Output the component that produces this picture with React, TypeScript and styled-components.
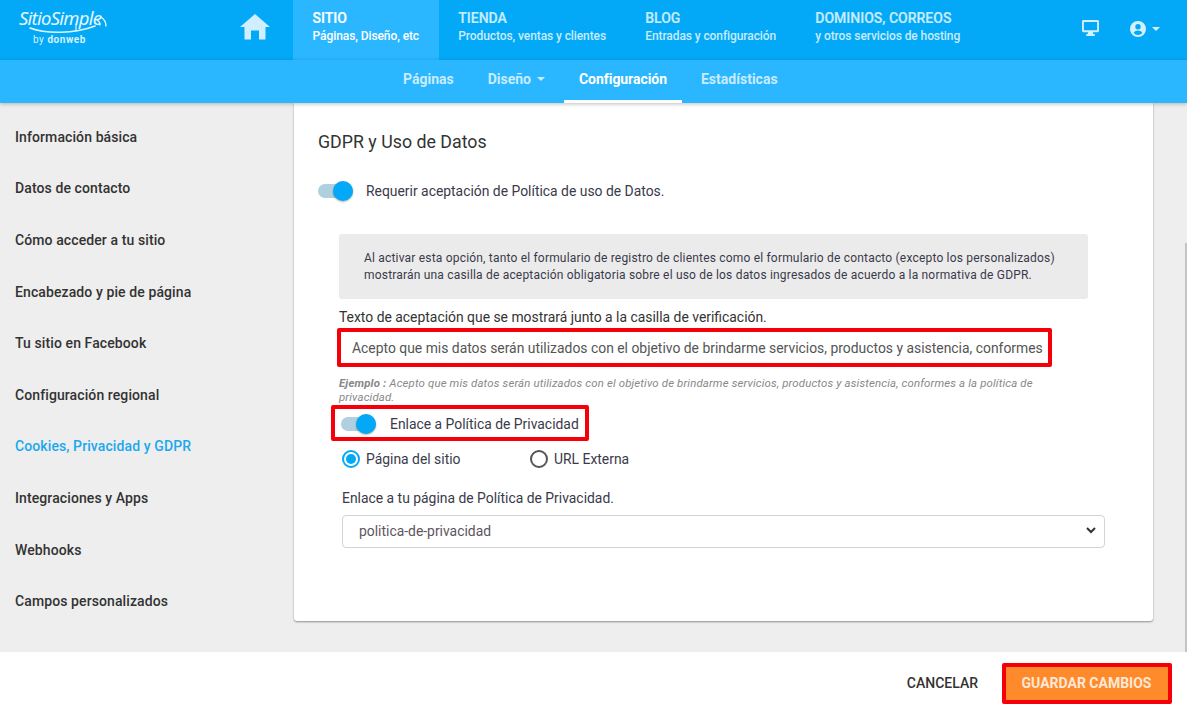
import React from "react";
import styled, { createGlobalStyle } from "styled-components";

const Global = createGlobalStyle`
  html, body { margin: 0; padding: 0; height: 712px; overflow: hidden; background: #fff; }
  body { font-family: Roboto, "Liberation Sans", sans-serif; color: #333; }
  * { box-sizing: border-box; }
`;
const Page = styled.div`width: 1187px; height: 712px; display: flex; flex-direction: column; position: relative; overflow: hidden;`;
const TopBar = styled.header`height: 60px; background: #03a9f7; display: flex; color: #fff; flex: none;`;
const LogoArea = styled.div`width: 293px; flex: none; display: flex; align-items: flex-start; justify-content: space-between; padding: 9px 23px 0 19px;`;
const LogoWrap = styled.div`width: 90px; height: 40px; position: relative;`;
const LogoTitle = styled.div`font-family: "Noto Sans", sans-serif; font-size: 18.5px; font-style: italic; letter-spacing: -0.75px; line-height: 20px; color: #e4f6ff; position: absolute; left: 0; top: -1px; white-space: nowrap;`;
const LogoSwoosh = styled.svg`position: absolute; left: 0; top: 0;`;
const LogoSub = styled.div`position: absolute; left: 14px; top: 25px; font-size: 10px; line-height: 12px; font-weight: 700; color: #d6f1ff; white-space: nowrap; letter-spacing: .55px; & span { font-weight: 400; }`;
const HomeIcon = styled.svg`margin-top: 5px;`;
const NavTab = styled.div<{ $active?: boolean }>`
  padding: 10px 19.6px 0; height: 60px; background: ${p => p.$active ? "#2bb7ff" : "transparent"};
  font-size: 12px; letter-spacing: -0.09px; line-height: 16px; color: ${p => p.$active ? "#fff" : "#c8ecff"}; font-weight: 500; white-space: nowrap;
`;
const NavTitle = styled.div`font-size: 14px; letter-spacing: 0; line-height: 16px; font-weight: 500; -webkit-text-stroke: .2px currentColor; margin-bottom: 2px;`;
const TopIcons = styled.div`margin-left: auto; display: flex; align-items: flex-start; padding: 20px 27px 0 0; gap: 31px; color: #d4f0ff;`;
const UserMenu = styled.div`display: flex; align-items: center; gap: 6px; margin-top: 1px;`;
const Caret = styled.span`display: inline-block; width: 0; height: 0; border-left: 4px solid transparent; border-right: 4px solid transparent; border-top: 4px solid currentColor;`;
const SubBar = styled.nav`height: 43px; background: #2bb7ff; flex: none; display: flex; padding-left: 388px; gap: 4px; position: relative; z-index: 2; box-shadow: 0 1px 4px rgba(0,0,0,.25);`;
const SubTab = styled.div<{ $active?: boolean }>`
  padding: 0 15px 2px; display: flex; align-items: center; gap: 6px; height: 43px; font-size: 14px; letter-spacing: ${p => p.$active ? "-0.05px" : "0"}; font-weight: 700; color: ${p => p.$active ? "#fff" : "#c8ecff"};
  border-bottom: 3px solid ${p => p.$active ? "#fff" : "transparent"};
  white-space: nowrap;
`;
const Body = styled.div`flex: 1; display: flex; background: #eee; min-height: 0;`;
const Side = styled.aside`width: 294px; flex: none; padding-top: 8px;`;
const SideItem = styled.div<{ $active?: boolean }>`
  height: 51.6px; display: flex; align-items: center; padding-left: 15px; font-size: 14px; font-weight: 500; letter-spacing: .1px;
  color: ${p => p.$active ? "#1ca8ee" : "#333"};
`;
const Card = styled.main`width: 859px; height: 518px; flex: none; background: #fff; border-radius: 0 0 3px 3px; box-shadow: 0 1px 2px rgba(0,0,0,.4); padding: 28px 24px 0;`;
const Title = styled.h2`margin: 0 0 26px; font-size: 17.8px; font-weight: 400; line-height: 22px; color: #333;`;
const Toggle = styled.div`width: 35px; height: 14px; border-radius: 7px; background: #b0cfdf; position: relative; flex: none;`;
const Knob = styled.div`width: 20px; height: 20px; border-radius: 50%; background: #03a9f7; position: absolute; right: 0; top: -3px; box-shadow: 0 1px 2px rgba(0,0,0,.3);`;
const ToggleRow = styled.div`display: flex; align-items: center; gap: 13px; font-size: 13.9px; line-height: 20px; height: 22px; color: #3a3a4a; padding-top: 1px;`;
const Indented = styled.div`padding-left: 21px; margin-top: 33px;`;
const Note = styled.div`width: 749px; height: 65px; margin-top: 1px; background: #ebebeb; border-radius: 3px; padding: 16px 25px; font-size: 12px; line-height: 16.5px; letter-spacing: .19px; color: #3a3a4a;`;
const FieldLabel = styled.div`font-size: 13.9px; line-height: 18px; margin-top: 9px; color: #333; white-space: nowrap;`;
const Redbox = styled.div`border: 4px solid #f50008; border-radius: 2px; background: #fff;`;
const InputBox = styled(Redbox)`width: 715px; height: 39px; margin-top: 2px; margin-left: -2px; padding: 0 3px 0 11px; display: flex; align-items: center; font-size: 13.9px; color: #555; white-space: nowrap;`;
const Example = styled.div`font-size: 11.4px; line-height: 14px; font-style: italic; color: #888; margin-top: 9px; width: 720px; letter-spacing: .15px; & b { font-weight: 700; }`;
const ToggleBox = styled(Redbox)`width: 258px; height: 36px; margin: 1px 0 0 -8px; padding-left: 6px; display: flex; align-items: center;`;
const ToggleLabel = styled.span`margin-left: 1px;`;
const Radios = styled.div`display: flex; margin: 7px 0 0 3px; height: 22px; align-items: center; font-size: 13.9px; color: #3a3a4a;`;
const Radio = styled.label<{ $width: number }>`display: flex; align-items: center; gap: 6px; width: ${p => p.$width}px;`;
const Dot = styled.span<{ $on?: boolean }>`
  width: 18px; height: 18px; border-radius: 50%; border: 2px solid ${p => p.$on ? "#03a9f7" : "#555"}; display: flex; align-items: center; justify-content: center;
  &::after { content: ""; width: 10px; height: 10px; border-radius: 50%; background: ${p => p.$on ? "#03a9f7" : "transparent"}; }
`;
const SelectLabel = styled.div`font-size: 13.9px; line-height: 18px; margin: 19px 0 0 3px; color: #3a3a4a;`;
const Select = styled.div`width: 763px; height: 33px; margin: 8px 0 0 3px; border: 1px solid #ced4da; border-radius: 4px; display: flex; align-items: center; justify-content: space-between; padding: 0 8px 2px 16px; font-size: 13.9px; color: #5d5560;`;
const Footer = styled.footer`height: 60px; flex: none; background: #fff; display: flex; align-items: center; justify-content: flex-end; padding: 2px 15px 0 0; gap: 24px;`;
const Cancel = styled.div`font-size: 14px; font-weight: 500; color: #333;`;
const Save = styled.div`width: 170px; height: 41px; background: #ff8a2b; border: 4px solid #f50008; border-radius: 2px; color: #ffe8d6; font-size: 14px; font-weight: 700; display: flex; align-items: center; justify-content: center; padding-right: 1px;`;
const Scroll = styled.div`position: absolute; right: 0; top: 243px; width: 2px; height: 409px; background: #c4c4c4;`;

const items = ["Información básica", "Datos de contacto", "Cómo acceder a tu sitio", "Encabezado y pie de página", "Tu sitio en Facebook", "Configuración regional", "Cookies, Privacidad y GDPR", "Integraciones y Apps", "Webhooks", "Campos personalizados"];

export default function App() {
  return (
    <Page>
      <Global />
      <TopBar>
        <LogoArea>
          <LogoWrap>
            <LogoTitle>SitioSimple</LogoTitle>
            <LogoSwoosh width="92" height="40" viewBox="0 0 92 40" fill="none" stroke="#e4f6ff" strokeLinecap="round">
              <path d="M11 19c16 6 44 6 65-2" strokeWidth="1.6" />
              <path d="M57 15v7" strokeWidth="1.2" />
              <path d="M78 11c2 1 3 3 3 5M82 8c3 2 5 5 5 9" strokeWidth="1.3" />
            </LogoSwoosh>
            <LogoSub><span>by</span> donweb</LogoSub>
          </LogoWrap>
          <HomeIcon width="30" height="26" viewBox="0 0 30 26" fill="#cfeeff"><path d="M15 0 0 13h4.500v12.500h6.500V16.500h8v9h6.500V13H30z" /></HomeIcon>
        </LogoArea>
        <NavTab $active><NavTitle>SITIO</NavTitle>Páginas, Diseño, etc</NavTab>
        <NavTab><NavTitle>TIENDA</NavTitle>Productos, ventas y clientes</NavTab>
        <NavTab><NavTitle>BLOG</NavTitle>Entradas y configuración</NavTab>
        <NavTab><NavTitle>DOMINIOS, CORREOS</NavTitle>y otros servicios de hosting</NavTab>
        <TopIcons>
          <svg width="17" height="16" viewBox="0 0 18 17" fill="currentColor"><path fillRule="evenodd" d="M1.500 0h15A1.500 1.500 0 0 1 18 1.500v10a1.500 1.500 0 0 1-1.500 1.500H11.500l.5 2h1.500v2h-9v-2H6l.5-2h-5A1.500 1.500 0 0 1 0 11.500v-10A1.500 1.500 0 0 1 1.500 0zM2 2v9h14V2z" /></svg>
          <UserMenu>
            <svg width="16" height="16" viewBox="0 0 16 16" fill="currentColor"><path fillRule="evenodd" d="M8 0a8 8 0 1 1 0 16A8 8 0 0 1 8 0zm0 3a2.700 2.700 0 1 0 0 5.400A2.700 2.700 0 0 0 8 3zm0 6.500c-2 0-4 1-4.300 2.400a5.600 5.600 0 0 0 8.600 0C12 10.500 10 9.500 8 9.500z" /></svg>
            <Caret />
          </UserMenu>
        </TopIcons>
      </TopBar>
      <SubBar>
        <SubTab>Páginas</SubTab>
        <SubTab>Diseño <Caret /></SubTab>
        <SubTab $active>Configuración</SubTab>
        <SubTab>Estadísticas</SubTab>
      </SubBar>
      <Body>
        <Side>
          {items.map(i => <SideItem key={i} $active={i.startsWith("Cookies")}>{i}</SideItem>)}
        </Side>
        <Card>
          <Title>GDPR y Uso de Datos</Title>
          <ToggleRow><Toggle><Knob /></Toggle>Requerir aceptación de Política de uso de Datos.</ToggleRow>
          <Indented>
            <Note>Al activar esta opción, tanto el formulario de registro de clientes como el formulario de contacto (excepto los personalizados) mostrarán una casilla de aceptación obligatoria sobre el uso de los datos ingresados de acuerdo a la normativa de GDPR.</Note>
            <FieldLabel>Texto de aceptación que se mostrará junto a la casilla de verificación.</FieldLabel>
            <InputBox>Acepto que mis datos serán utilizados con el objetivo de brindarme servicios, productos y asistencia, conformes</InputBox>
            <Example><b>Ejemplo :</b> Acepto que mis datos serán utilizados con el objetivo de brindarme servicios, productos y asistencia, conformes a la política de privacidad.</Example>
            <ToggleBox><ToggleRow><Toggle><Knob /></Toggle><ToggleLabel>Enlace a Política de Privacidad</ToggleLabel></ToggleRow></ToggleBox>
            <Radios>
              <Radio $width={188}><Dot $on />Página del sitio</Radio>
              <Radio $width={120}><Dot />URL Externa</Radio>
            </Radios>
            <SelectLabel>Enlace a tu página de Política de Privacidad.</SelectLabel>
            <Select>politica-de-privacidad
              <svg width="10" height="7" viewBox="0 0 10 7" fill="none" stroke="#333" strokeWidth="2"><path d="M1 1l4 4 4-4" /></svg>
            </Select>
          </Indented>
        </Card>
      </Body>
      <Footer>
        <Cancel>CANCELAR</Cancel>
        <Save>GUARDAR CAMBIOS</Save>
      </Footer>
      <Scroll />
    </Page>
  );
}
